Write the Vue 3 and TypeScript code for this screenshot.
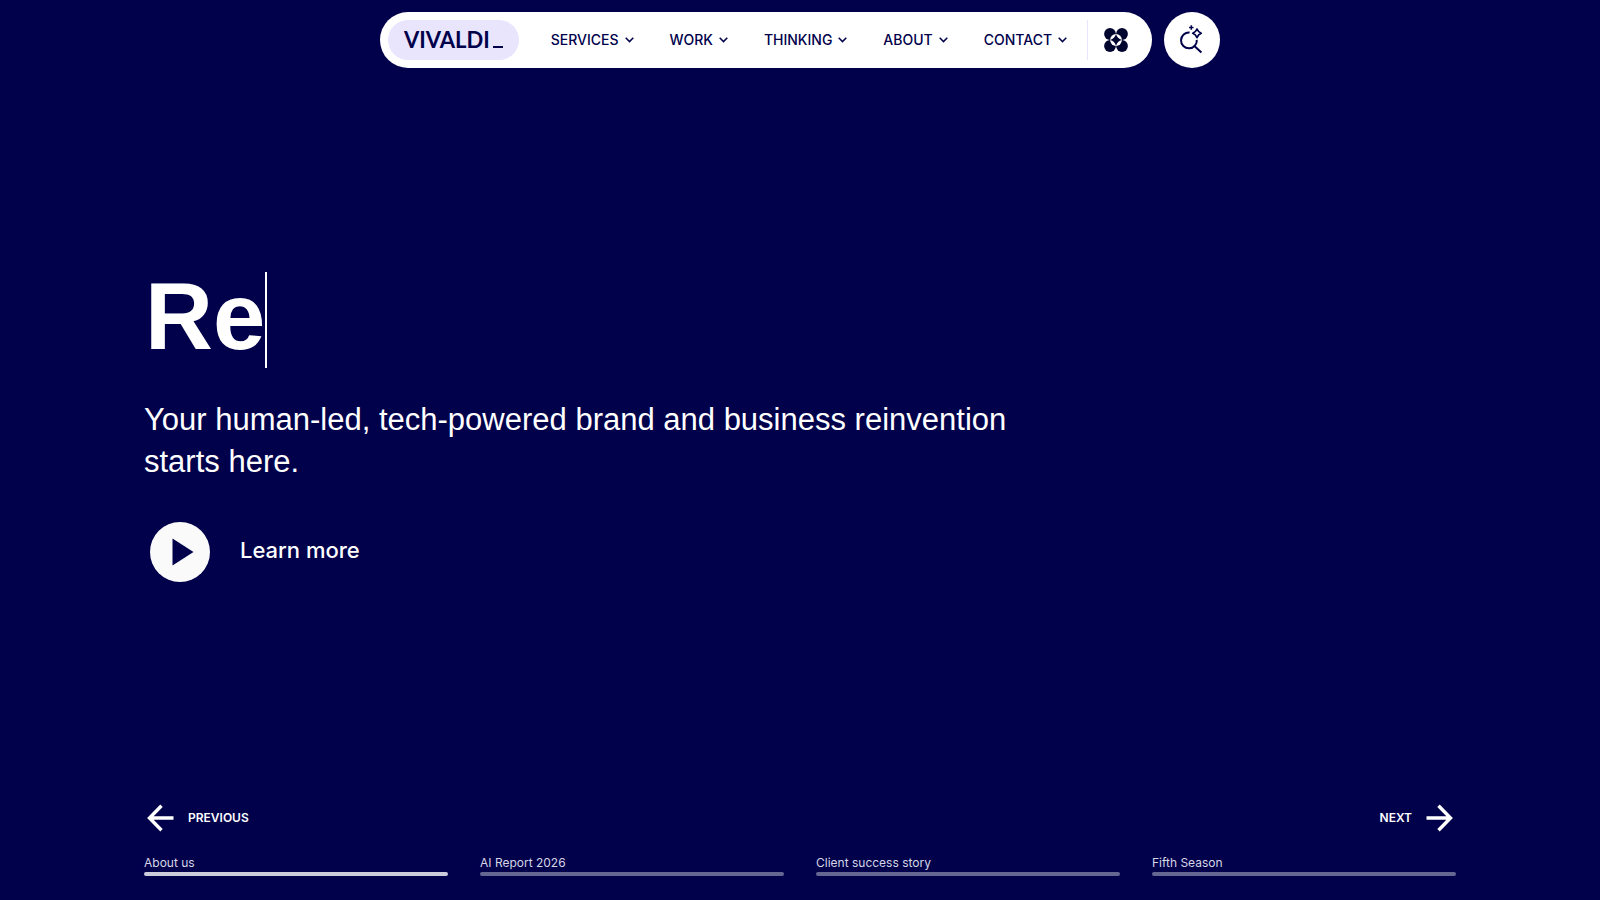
<script setup lang="ts">
interface Slide {
  label: string
  active: boolean
}

const menu: string[] = ['Services', 'Work', 'Thinking', 'About', 'Contact']

const slides: Slide[] = [
  { label: 'About us', active: true },
  { label: 'AI Report 2026', active: false },
  { label: 'Client success story', active: false },
  { label: 'Fifth Season', active: false },
]
</script>

<template>
  <div class="page">
    <header class="header">
      <nav class="nav" aria-label="Main">
        <a class="logo" href="#">VIVALDI<span class="logo-bar"></span></a>
        <div class="menu">
          <button v-for="item in menu" :key="item" class="menu-item" type="button">
            {{ item }}
            <svg class="chevron" viewBox="0 0 9 6" width="9" height="6" aria-hidden="true">
              <path d="M0.7 0.8 4.5 4.6 8.3 0.8" fill="none" stroke="currentColor" stroke-width="1.5" />
            </svg>
          </button>
        </div>
        <button class="apps" type="button" aria-label="Apps">
          <svg viewBox="0 0 24 24" width="24" height="24" aria-hidden="true">
            <g fill="#00052e">
              <circle cx="6" cy="6" r="5.9" />
              <circle cx="18" cy="6" r="5.9" />
              <circle cx="6" cy="18" r="5.9" />
              <circle cx="18" cy="18" r="5.9" />
            </g>
            <circle cx="12" cy="12" r="5.9" fill="#fff" />
            <path d="M12 6.1A8.5 8.5 0 0 0 17.9 12 8.5 8.5 0 0 0 12 17.9 8.5 8.5 0 0 0 6.1 12 8.5 8.5 0 0 0 12 6.1Z" fill="#00052e" />
          </svg>
        </button>
      </nav>
      <button class="search" type="button" aria-label="Search">
        <svg viewBox="0 0 28 28" width="28" height="28" fill="none" stroke="currentColor" stroke-width="2" aria-hidden="true">
          <path d="M11.6 6.6A7.9 7.9 0 1 0 18.8 13.8M16.4 20 23.4 26.6" />
          <path d="M19 3Q20.2 6.1 23.3 7.3 20.2 8.5 19 11.6 17.8 8.5 14.7 7.3 17.8 6.1 19 3Z" stroke-width="1.7" stroke-linejoin="round" />
          <path d="M13.3 -0.7V3.7M11.1 1.5H15.5" stroke-width="1.5" />
        </svg>
      </button>
    </header>

    <main class="hero">
      <h1 class="title">Re<span class="caret"></span></h1>
      <p class="lead">Your human-led, tech-powered brand and business reinvention starts here.</p>
      <a class="more" href="#">
        <svg viewBox="0 0 60 60" width="60" height="60" aria-hidden="true">
          <circle cx="30" cy="30" r="30" fill="#fafafa" />
          <path d="M22.5 16.5V43.5L43.5 30Z" fill="#00004b" />
        </svg>
        <span class="more-text">Learn more</span>
      </a>
    </main>

    <footer class="footer">
      <div class="pager">
        <button class="step" type="button">
          <svg viewBox="0 0 32 32" width="32" height="32" aria-hidden="true">
            <path d="M29.5 17H6M17.5 4.8 5.5 17 17.5 29.2" />
          </svg>
          Previous
        </button>
        <button class="step" type="button">
          Next
          <svg viewBox="0 0 32 32" width="32" height="32" aria-hidden="true">
            <path d="M2.5 17H26M14.5 4.8 26.5 17 14.5 29.2" />
          </svg>
        </button>
      </div>
      <div class="slides">
        <button v-for="slide in slides" :key="slide.label" class="slide" :class="{ active: slide.active }" type="button">
          {{ slide.label }}
          <span class="bar"></span>
        </button>
      </div>
    </footer>
  </div>
</template>

<style>
body {
  margin: 0;
  background: #00004b;
}
</style>

<style scoped>
.page {
  min-height: 100vh;
  box-sizing: border-box;
  display: flex;
  flex-direction: column;
  background: #00004b;
  color: #fff;
  font-family: Inter, "Liberation Sans", sans-serif;
}

button {
  padding: 0;
  border: 0;
  background: none;
  color: inherit;
  font: inherit;
  cursor: pointer;
}

a {
  color: inherit;
  text-decoration: none;
}

svg {
  display: block;
  flex: none;
  overflow: visible;
}

.header {
  display: flex;
  justify-content: center;
  gap: 12px;
  padding-top: 12px;
  color: #00004b;
}

.nav {
  display: flex;
  align-items: center;
  height: 56px;
  box-sizing: border-box;
  padding: 8px 24px 8px 8px;
  border-radius: 28px;
  background: #fff;
}

.logo {
  display: flex;
  align-items: center;
  gap: 3px;
  height: 40px;
  padding: 0 16px;
  border-radius: 20px;
  background: #e8e5fd;
  font: 700 22px/40px Lato, sans-serif;
}

.logo-bar {
  width: 10px;
  height: 2px;
  margin-top: 13px;
  background: currentColor;
}

.menu {
  display: flex;
  gap: 36px;
  padding: 0 20px 0 32px;
}

.menu-item {
  display: flex;
  align-items: center;
  gap: 6px;
  font-size: 14px;
  font-weight: 500;
  line-height: 38px;
  text-transform: uppercase;
}

.apps {
  padding: 8px 0 8px 16px;
  border-left: 1px solid #e8e5fd;
}

.search {
  display: grid;
  place-items: center;
  width: 56px;
  height: 56px;
  border-radius: 50%;
  background: #fff;
}

.hero {
  flex: 1;
  padding: 204px 9% 0;
}

.title {
  display: flex;
  margin: 0;
  font-family: "Liberation Sans", Arial, sans-serif;
  font-size: 94px;
  font-weight: 700;
  line-height: 90px;
  padding-left: 1px;
}

.caret {
  width: 2px;
  height: 96px;
  background: #fff;
}

.lead {
  max-width: 880px;
  margin: 31px 0 0;
  font-family: "Liberation Sans", Arial, sans-serif;
  font-size: 31px;
  line-height: 42px;
}

.more {
  display: inline-flex;
  align-items: center;
  gap: 30px;
  margin-top: 39px;
  padding-left: 6px;
  font-size: 22px;
  font-weight: 500;
}

.more-text {
  padding-bottom: 4px;
}

.footer {
  padding: 0 9% 24px;
}

.pager {
  display: flex;
  justify-content: space-between;
}

.step {
  display: flex;
  align-items: center;
  gap: 12px;
  font-size: 12px;
  font-weight: 600;
  text-transform: uppercase;
}

.step path {
  fill: none;
  stroke: currentColor;
  stroke-width: 3.4;
}

.slides {
  display: grid;
  grid-template-columns: repeat(4, 1fr);
  gap: 32px;
  margin-top: 21px;
}

.slide {
  color: #d6d6e6;
  font-size: 12px;
  line-height: 18px;
  text-align: left;
}

.bar {
  display: block;
  height: 4px;
  border-radius: 2px;
  background: #666693;
}

.active .bar {
  background: #ccccdb;
}
</style>
